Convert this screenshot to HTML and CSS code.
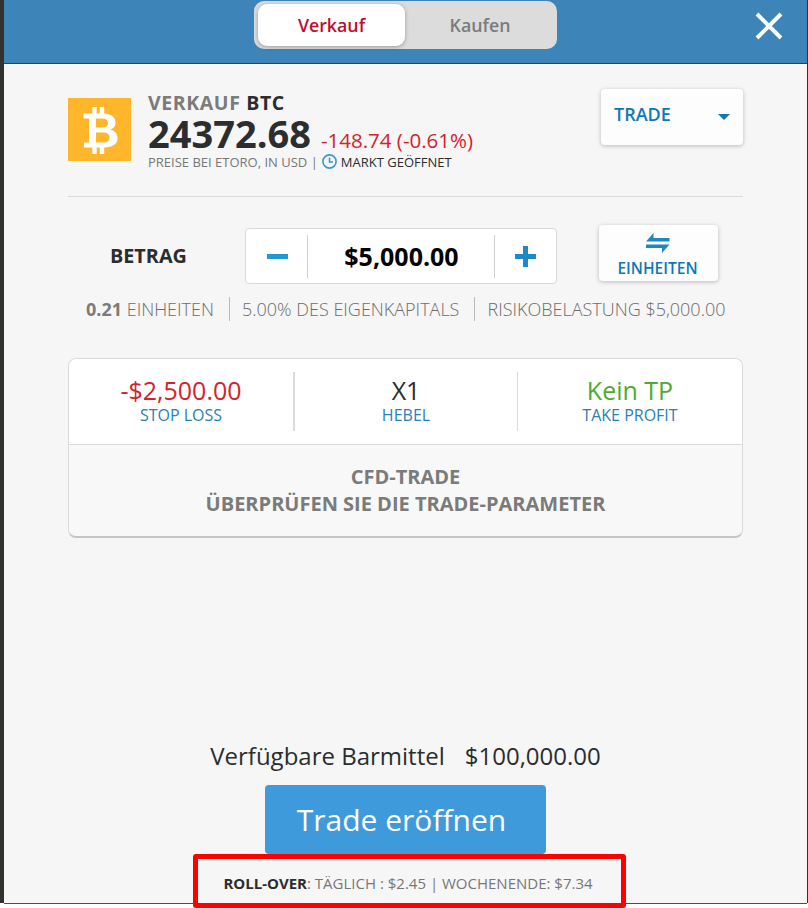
FILE: index.html
```html
<!DOCTYPE html>
<html lang="de">
<head>
    <meta charset="UTF-8">
    <meta name="viewport" content="width=device-width, initial-scale=1.0">
    <title>Verkauf BTC</title>
    <link rel="stylesheet" href="styles.css">
</head>
<body>
    <div class="dialog">
        <header class="dialog-header">
            <div class="switch">
                <button type="button" class="switch-btn active">Verkauf</button>
                <button type="button" class="switch-btn">Kaufen</button>
            </div>
            <button type="button" class="close-btn" aria-label="Schließen">
                <svg width="28" height="28" viewBox="0 0 28 28"><path d="M2 2 26 26M26 2 2 26" stroke="#fff" stroke-width="4" fill="none"/></svg>
            </button>
        </header>

        <main class="dialog-body">
            <section class="instrument">
                <svg class="coin" width="63" height="63" viewBox="0 0 63 63">
                    <rect width="63" height="63" fill="#ffb62b"/>
                    <path d="M26.5 9v8M34 9v8M26.5 47v9M34 47v9" stroke="#fff" stroke-width="4.4" fill="none"/>
                    <path fill="#fff" fill-rule="evenodd" d="M15.500 15.500H35C43 15.500 47.500 19 47.500 24.500C47.500 28.500 45.500 30.500 42 31.500C46.500 32.500 49.500 35.500 49.500 40C49.500 46 44.500 49.500 36.500 49.500H16V44.500H21V20.500H15.500ZM28 20.500V29.500H34C38 29.500 40 28 40 25C40 22 38 20.500 34 20.500ZM28 34.500V44.500H35C39.500 44.500 41.500 42.500 41.500 39.500C41.500 36.500 39.500 34.500 35 34.500Z"/>
                </svg>
                <div class="quote">
                    <div class="quote-title">VERKAUF <b>BTC</b></div>
                    <div class="quote-price"><strong>24372.68</strong><span>-148.74 (-0.61%)</span></div>
                    <div class="quote-note">
                        <span>PREISE BEI ETORO, IN USD |</span>
                        <svg width="15" height="15" viewBox="0 0 15 15" fill="none" stroke="#3f97cc" stroke-width="1.600"><circle cx="7.500" cy="7.500" r="6.600"/><path d="M7.500 3.500V8H11"/></svg>
                        <span class="market">MARKT GEÖFFNET</span>
                    </div>
                </div>
                <button type="button" class="card-btn order-type">
                    TRADE
                    <svg width="12" height="6" viewBox="0 0 12 6"><path d="M0 0H12L6 6Z" fill="#0e78b4"/></svg>
                </button>
            </section>

            <section class="amount">
                <div class="amount-label">BETRAG</div>
                <div class="stepper">
                    <button type="button" aria-label="Weniger"><svg width="21" height="21" viewBox="0 0 21 21"><path d="M0 10.500H21" stroke="#2199d0" stroke-width="5"/></svg></button>
                    <div class="stepper-value">$5,000.00</div>
                    <button type="button" aria-label="Mehr"><svg width="21" height="21" viewBox="0 0 21 21"><path d="M0 10.500H21M10.500 0V21" stroke="#1d8ac6" stroke-width="5"/></svg></button>
                </div>
                <button type="button" class="card-btn units">
                    <svg width="24" height="20" viewBox="0 0 24 20" fill="#2087c3"><path d="M0 8.500 7.500 0V5H23.500V8.500ZM0 11.500H23.500L16 20V15H0Z"/></svg>
                    EINHEITEN
                </button>
            </section>

            <div class="amount-info">
                <span><b>0.21</b> EINHEITEN</span>
                <span>5.00% DES EIGENKAPITALS</span>
                <span>RISIKOBELASTUNG $5,000.00</span>
            </div>

            <section class="params">
                <div class="tabs">
                    <div class="tab">
                        <div class="tab-value red">-$2,500.00</div>
                        <div class="tab-label">STOP LOSS</div>
                    </div>
                    <div class="tab">
                        <div class="tab-value">X1</div>
                        <div class="tab-label">HEBEL</div>
                    </div>
                    <div class="tab">
                        <div class="tab-value green">Kein TP</div>
                        <div class="tab-label">TAKE PROFIT</div>
                    </div>
                </div>
                <div class="params-note">CFD-TRADE<br>ÜBERPRÜFEN SIE DIE TRADE-PARAMETER</div>
            </section>
        </main>

        <footer class="dialog-footer">
            <div class="cash"><span>Verfügbare Barmittel</span><span>$100,000.00</span></div>
            <button type="button" class="open-btn">Trade eröffnen</button>
            <div class="rollover"><b>ROLL-OVER</b>: TÄGLICH : $2.45 | WOCHENENDE: $7.34</div>
        </footer>
    </div>
</body>
</html>
```
FILE: styles.css
```css
:root {
    --header: #3d85b8;
    --blue: #0e78b4;
    --link: #2a7fb4;
    --dark: #2b2d2e;
    --gray: #7b7b7b;
    --line: #dadada;
}

* {
    box-sizing: border-box;
}

body {
    margin: 0;
    height: 908px;
    overflow: hidden;
    background: linear-gradient(#32312e, #32312e) no-repeat 0 0 / 100% 903px #fff;
    font-family: "Open Sans", "Noto Sans", sans-serif;
    color: var(--dark);
}

b {
    font-weight: 700;
}

button {
    font-family: inherit;
    border: none;
    padding: 0;
    background: none;
    cursor: pointer;
}

svg {
    display: block;
    flex: none;
}

.dialog {
    width: 803px;
    height: 904px;
    margin-left: 4px;
    background: #f6f6f6;
    border-bottom: 1px solid #2f5478;
}

.dialog-header {
    display: flex;
    justify-content: space-between;
    height: 64px;
    padding: 1px 24px 0 250px;
    background: var(--header);
    border-bottom: 1px solid #16486f;
}

.switch {
    display: flex;
    width: 303px;
    height: 48px;
    padding: 3px 4px;
    border-radius: 10px;
    background: #dcdcdc;
}

.switch-btn {
    width: 147px;
    height: 42px;
    padding-left: 3px;
    border-radius: 9px;
    font-size: 17.8px;
    font-weight: 600;
    color: var(--gray);
}

.switch-btn.active {
    padding-left: 0;
    background: #fff;
    color: #c00d2c;
    box-shadow: 0 1px 4px rgba(0, 0, 0, 0.3);
}

.close-btn {
    height: 28px;
    margin-top: 11px;
}

.dialog-body {
    padding: 0 64px;
}

.instrument {
    display: flex;
    height: 133px;
    border-bottom: 1px solid var(--line);
}

.coin {
    margin-top: 34px;
}

.quote {
    padding: 26px 0 0 17px;
    white-space: nowrap;
}

.quote-title {
    line-height: 26px;
    font-size: 19.5px;
    font-weight: 700;
    letter-spacing: 0.6px;
    color: var(--gray);
}

.quote-title b {
    color: var(--dark);
}

.quote-price {
    display: flex;
    align-items: baseline;
    gap: 10px;
    height: 37px;
    line-height: 34px;
}

.quote-price strong {
    font-size: 38px;
}

.quote-price span {
    font-size: 20.5px;
    color: #d3222c;
}

.quote-note {
    display: flex;
    align-items: center;
    gap: 4px;
    height: 17px;
    font-size: 13px;
    color: #777;
}

.market {
    color: var(--dark);
}

.card-btn {
    border-radius: 4px;
    background: #fdfdfd;
    box-shadow: 0 1px 4px rgba(0, 0, 0, 0.25);
    color: var(--blue);
    font-weight: 600;
}

.order-type {
    display: flex;
    align-items: center;
    justify-content: space-between;
    width: 142px;
    height: 56px;
    margin: 25px 0 0 auto;
    padding: 0 13px 6px;
    font-size: 18px;
}

.order-type svg {
    margin-top: 6px;
}

.amount {
    display: flex;
    height: 87px;
}

.amount-label {
    width: 177px;
    padding: 45px 0 0 42px;
    line-height: 28px;
    font-size: 19.8px;
    font-weight: 700;
}

.stepper {
    display: flex;
    align-items: center;
    width: 312px;
    height: 56px;
    margin-top: 31px;
    border: 1px solid var(--line);
    border-radius: 4px;
    background: #fff;
}

.stepper button {
    display: flex;
    justify-content: center;
    width: 61px;
}

.stepper button:first-child {
    padding-left: 2px;
}

.stepper-value {
    flex: 1;
    height: 43px;
    padding-left: 1px;
    line-height: 43px;
    border: solid #cfcfcf;
    border-width: 0 1px;
    text-align: center;
    font-size: 25px;
    font-weight: 700;
    color: #000;
}

.units {
    display: flex;
    flex-direction: column;
    align-items: center;
    width: 119px;
    height: 56px;
    margin: 28px 0 0 42px;
    padding: 8px 2px 0 0;
    line-height: 31px;
    font-size: 15.5px;
}

.amount-info {
    display: flex;
    height: 24px;
    margin: 13px 0 37px 18px;
    line-height: 24px;
    font-size: 18px;
    font-weight: 300;
    color: #6c6c6c;
    white-space: nowrap;
}

.amount-info b {
    color: var(--gray);
}

.amount-info span + span {
    margin-left: 15px;
    padding-left: 12px;
    border-left: 1px solid #bbb;
}

.params {
    height: 180px;
    border: 1px solid var(--line);
    border-bottom: 2px solid #c6c6c6;
    border-radius: 8px;
    background: #f8f8f8;
    overflow: hidden;
}

.tabs {
    display: grid;
    grid-template-columns: 224px 224px 1fr;
    height: 86px;
    padding: 13px 0;
    background: #fff;
    border-bottom: 1px solid var(--line);
}

.tab {
    text-align: center;
}

.tab + .tab {
    border-left: 1px solid var(--line);
}

.tab:nth-child(2) {
    border-left-width: 2px;
}

.tab-value {
    line-height: 36px;
    font-size: 25px;
}

.tab-label {
    line-height: 14px;
    font-size: 16px;
    color: var(--link);
}

.red {
    color: #d3222c;
}

.green {
    color: #4dab32;
}

.params-note {
    padding-top: 18px;
    line-height: 27px;
    text-align: center;
    font-size: 20px;
    font-weight: 700;
    color: var(--gray);
}

.dialog-footer {
    display: flex;
    flex-direction: column;
    align-items: center;
    margin-top: 200px;
}

.cash {
    display: flex;
    gap: 20px;
    line-height: 36px;
    font-size: 24px;
}

.open-btn {
    width: 281px;
    height: 69px;
    margin-top: 11px;
    padding-right: 8px;
    border-radius: 4px;
    background: #3f9adb;
    color: #fff;
    font-size: 30px;
}

.rollover {
    width: 433px;
    height: 54px;
    margin-left: 8px;
    padding-right: 3px;
    border: 5px solid #f00;
    border-radius: 3px;
    line-height: 49px;
    text-align: center;
    font-size: 15px;
    color: #777;
}

.rollover b {
    color: var(--dark);
}
```
